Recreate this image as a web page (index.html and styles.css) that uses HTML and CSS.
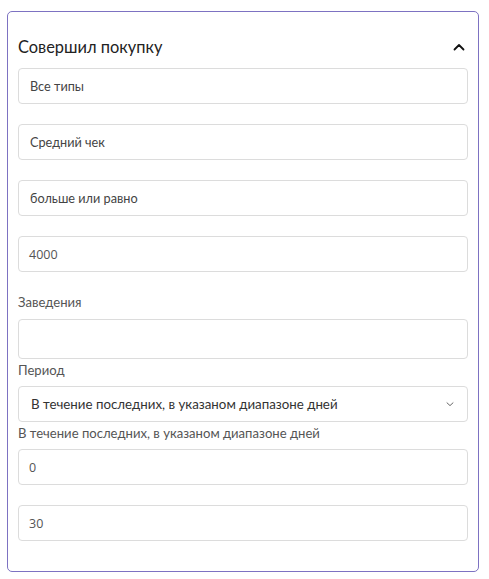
FILE: index.html
```html
<!DOCTYPE html>
<html lang="ru">
<head>
<meta charset="utf-8">
<title>Совершил покупку</title>
<link rel="stylesheet" href="styles.css">
</head>
<body>
<div class="card">
  <div class="card-header">
    <span class="card-title">Совершил покупку</span>
    <svg class="chev-up" width="14" height="14" viewBox="0 0 14 14"><path d="M2.5 9.5 L7 5 L11.5 9.5" fill="none" stroke="#111" stroke-width="1.8" stroke-linecap="round" stroke-linejoin="round"/></svg>
  </div>
  <div class="stack">
    <div class="input">Все типы</div>
    <div class="input">Средний чек</div>
    <div class="input">больше или равно</div>
    <div class="input num">4000</div>
  </div>
  <div class="field first">
    <div class="label">Заведения</div>
    <div class="input tall"></div>
  </div>
  <div class="field">
    <div class="label">Период</div>
    <div class="input select">
      <span class="select-text">В течение последних, в указаном диапазоне дней</span>
      <svg class="chev-down" width="10" height="10" viewBox="0 0 10 10"><path d="M2 3.8 L5 6.6 L8 3.8" fill="none" stroke="#666" stroke-width="1" stroke-linecap="round" stroke-linejoin="round"/></svg>
    </div>
  </div>
  <div class="field">
    <div class="label">В течение последних, в указаном диапазоне дней</div>
    <div class="stack">
      <div class="input num">0</div>
      <div class="input num">30</div>
    </div>
  </div>
</div>
</body>
</html>
```

FILE: styles.css
```css
* { box-sizing: border-box; }
html, body { margin: 0; padding: 0; background: #fff; }
body {
  font-family: Lato, "Noto Sans", sans-serif;
  color: #333;
  padding: 11px 0 0 7px;
}
.card {
  width: 472px;
  border: 1px solid #7d72c2;
  border-radius: 5px;
  padding: 0 10px 30px 10px;
}
.card-header {
  display: flex;
  align-items: center;
  justify-content: space-between;
  padding: 24px 2px 10px 0;
  height: 56px;
}
.card-title {
  font-size: 16.4px;
  line-height: 22px;
  color: #222;
}
.chev-up { display: block; }
.stack {
  display: flex;
  flex-direction: column;
  gap: 20px;
}
.input {
  height: 36px;
  border: 1px solid #dcdcdc;
  border-radius: 4px;
  padding: 0 11px;
  display: flex;
  align-items: center;
  font-size: 12.7px;
  color: #444;
}
.input.num {
  font-family: "Open Sans", sans-serif;
  font-size: 12.5px;
  padding-left: 10px;
  color: #555;
}
.input.tall { height: 40px; }
.select {
  justify-content: space-between;
  padding: 0 12px 0 12px;
}
.select-text { font-size: 13.3px; color: #333; }
.chev-down { display: block; }
.field { margin-top: 1px; }
.field.first { margin-top: 20px; }
.label {
  font-size: 13.1px;
  line-height: 20px;
  color: #555;
  margin-bottom: 6px;
}
.field.first .label { margin-bottom: 7px; }
```
